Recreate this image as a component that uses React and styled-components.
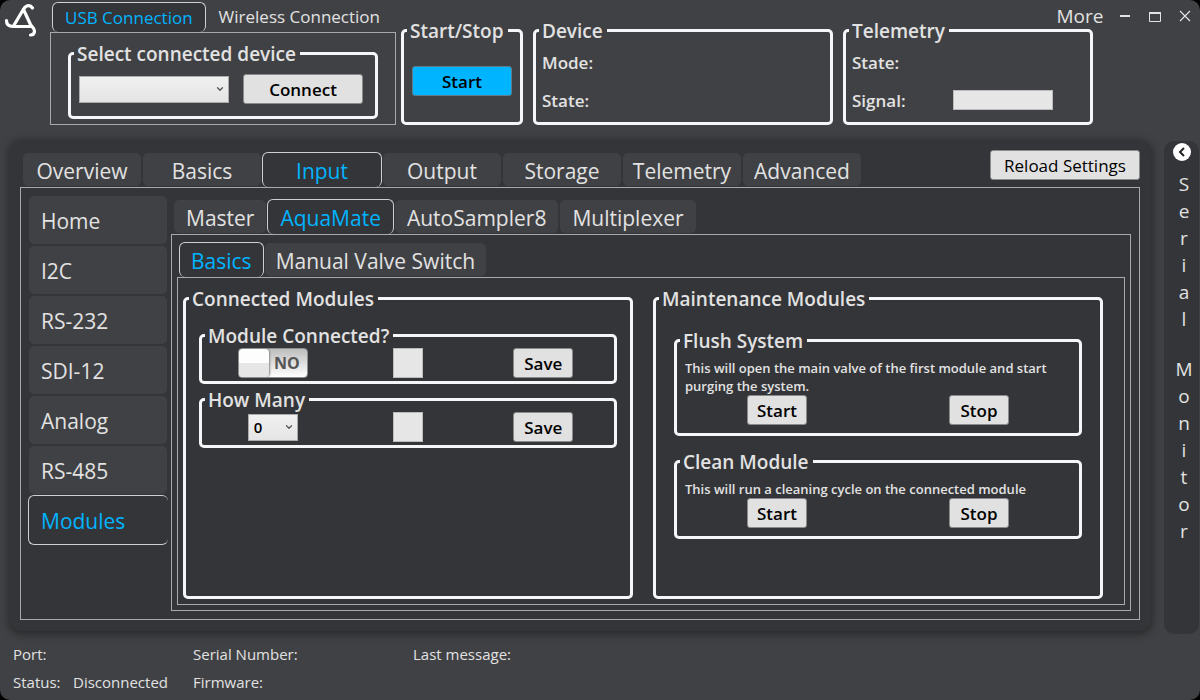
import React, { useState } from 'react'
import styled, { createGlobalStyle, css } from 'styled-components'
import { ChevronDown } from 'lucide-react'

const GlobalStyle = createGlobalStyle`
  * {
    box-sizing: border-box;
  }

  body {
    margin: 0;
    background: #000;
    color: #e2e2e2;
    font-family: 'Open Sans', 'Noto Sans', sans-serif;
    font-size: 15px;
  }

  button, select {
    font-family: inherit;
  }
`

const Window = styled.div`
  display: flex;
  flex-direction: column;
  min-height: 100vh;
  background: #404144;
  border-radius: 10px;
`

/* ---------- header ---------- */

const Header = styled.header`
  display: flex;
  padding-bottom: 15px;
`

const Logo = styled.svg`
  flex: none;
  width: 50px;
  height: 40px;
`

const Connection = styled.section`
  flex: none;
  width: 346px;
  padding-top: 2px;
`

const HeaderMain = styled.div`
  flex: 1;
  display: grid;

  > * {
    grid-area: 1 / 1;
  }
`

const Groups = styled.div`
  display: flex;
  gap: 10px;
  margin: 19px 0 0 5px;
`

const WindowBar = styled.div`
  display: flex;
  align-items: center;
  align-self: start;
  justify-self: end;
  height: 32px;
`

const BarButton = styled.button`
  display: flex;
  align-items: center;
  justify-content: center;
  width: ${props => props.$wide ? '60px' : '30px'};
  height: 32px;
  padding: 0;
  border: 0;
  background: none;
  color: #e2e2e2;
  font-size: 19px;
`

/* ---------- tabs ---------- */

const TabList = styled.div`
  display: flex;
  align-items: flex-end;
  padding-left: 2px;
`

const selectedTab = css`
  border-color: #d0d0d0;
  background: #343538;
  color: #00b4ff;
`

const smallTab = css`
  height: 30px;
  padding: 0 12px;
  font-size: 17px;
`

const fixedTab = css`
  width: 120px;
  padding: 2px 0 0;
`

const tightTab = css`
  padding: 2px 11px 0;
`

const Tab = styled.button`
  height: 35px;
  padding: 2px 12px 0;
  border: 1px solid transparent;
  border-bottom: ${props => props.$selected ? '0' : '1px solid transparent'};
  border-radius: 6px;
  background: #404144;
  background-clip: padding-box;
  color: #e2e2e2;
  font-size: 21px;
  line-height: 28px;
  white-space: nowrap;
  ${props => props.$small && smallTab}
  ${props => props.$fixed && fixedTab}
  ${props => props.$tight && tightTab}
  ${props => props.$selected && selectedTab}
`

const TabPanel = styled.div`
  flex: 1;
  border: 1px solid #a9a9a9;
`

const SideTabs = styled.nav`
  flex: none;
  display: flex;
  flex-direction: column;
  width: 150px;
  padding: 7px 3px 7px 7px;
`

const SideTab = styled.button`
  height: 50px;
  padding: 2px 12px 0;
  border: 1px solid transparent;
  border-right: ${props => props.$selected ? '0' : '1px solid transparent'};
  border-radius: 6px;
  background: #404144;
  background-clip: padding-box;
  color: #e2e2e2;
  font-size: 21px;
  text-align: left;
  ${props => props.$selected && selectedTab}
`

/* ---------- group boxes and controls ---------- */

const Group = styled.fieldset`
  width: ${props => props.$width || 'auto'};
  min-width: 0;
  margin: 0;
  padding: 0 3px;
  border: 3px solid #f4f6f8;
  border-radius: 5px;

  > legend {
    height: 23px;
    padding: 0 4px 0 3px;
    font-size: 19px;
    font-weight: 600;
    line-height: 24px;
    white-space: nowrap;
  }
`

const Stack = styled.div`
  display: flex;
  flex-direction: column;
  gap: ${props => props.$gap};
  padding: ${props => props.$padding};
`

const Button = styled.button`
  width: ${props => props.$width || '60px'};
  height: 30px;
  padding: 2px 0 0;
  border: 1px solid ${props => props.$accent ? '#607a88' : '#8a8a8a'};
  border-radius: 3px;
  background: ${props => props.$accent ? '#00b4ff' : '#e1e1e1'};
  color: #000;
  font-size: 17px;
  font-weight: ${props => props.$light ? 400 : 600};
  line-height: 26px;
`

const ConnectRow = styled.div`
  display: flex;
  align-items: center;
  justify-content: space-between;
  padding: 9px 9px 12px 5px;
`

const SelectBox = styled.div`
  display: grid;
  align-items: center;
  width: ${props => props.$width};

  > * {
    grid-area: 1 / 1;
  }

  svg {
    justify-self: end;
    margin-right: 4px;
    color: #555;
    pointer-events: none;
  }

  select {
    width: 100%;
    height: 27px;
    padding: 0 5px;
    border: 1px solid #acacac;
    border-radius: 0;
    appearance: none;
    background: linear-gradient(#f0f0f0, #e5e5e5);
    color: #000;
    font-size: 15px;
    font-weight: 600;
  }
`

const CenterBody = styled.div`
  padding: 24px 5px;
`

const Field = styled.div`
  display: grid;
  grid-template-columns: 101px 1fr;
  align-items: center;
  height: 38px;
  font-size: 17px;
  font-weight: 600;
`

const Signal = styled.progress`
  width: 100px;
  height: 20px;
  border: 1px solid #bcbcbc;
  appearance: none;

  &::-webkit-progress-bar {
    background: #e6e6e6;
  }
`

const SettingRow = styled.div`
  display: grid;
  grid-template-columns: repeat(3, 1fr);
  align-items: center;
  justify-items: center;
  padding: 1px 0 3px;
`

const Indicator = styled.div`
  width: 30px;
  height: 30px;
  border: 1px solid #bcbcbc;
  background: #e6e6e6;
`

const Toggle = styled.label`
  display: grid;
  align-items: center;
  width: 70px;
  height: 30px;
  border: 1px solid #8e8f8f;
  border-radius: 4px;
  background: linear-gradient(#bdbdbd, #ffffff);
  color: #555;
  font-weight: 700;

  > * {
    grid-area: 1 / 1;
  }

  input {
    width: 30px;
    height: 28px;
    margin: 0;
    border-radius: 4px;
    appearance: none;
    background: linear-gradient(#fdfdfd 50%, #e6e6e6 50%);
    box-shadow: 1px 0 2px #888;
  }

  span {
    padding-right: 7px;
    font-size: 16px;
    text-align: right;
  }
`

const Hint = styled.p`
  margin: 0;
  padding: 7px 5px 0;
  font-size: 13px;
  font-weight: 600;
  line-height: 18px;
`

const ActionRow = styled.div`
  display: grid;
  grid-template-columns: 1fr 1fr;
  column-gap: 8px;
  justify-items: center;
  padding-bottom: 8px;
`

/* ---------- workspace ---------- */

const Workspace = styled.div`
  flex: 1;
  display: flex;
  gap: 13px;
  padding: 0 1px 0 10px;
`

const Panel = styled.main`
  flex: 1;
  display: flex;
  flex-direction: column;
  min-width: 0;
  margin-bottom: 3px;
  padding: 10px 11px 11px 10px;
  border-radius: 12px;
  background: #343538;
  box-shadow: 0 2px 8px 1px rgba(0, 0, 0, 0.4);
`

const TopRow = styled.div`
  display: flex;
  justify-content: space-between;
  height: 37px;
`

const InputPanel = styled(TabPanel)`
  display: flex;
  padding-right: 8px;
  padding-bottom: 8px;
`

const Column = styled.div`
  flex: 1;
  display: flex;
  flex-direction: column;
  min-width: 0;
  padding-top: ${props => props.$top};
`

const ModulesPanel = styled(TabPanel)`
  display: flex;
  padding: 0 5px 5px;
`

const BasicsPanel = styled(TabPanel)`
  display: grid;
  grid-template-columns: 1fr 1fr;
  column-gap: 20px;
  padding: 9px 21px 5px 5px;
`

const SerialBar = styled.aside`
  flex: none;
  display: flex;
  flex-direction: column;
  align-items: center;
  gap: 23px;
  width: 35px;
  margin-top: 1px;
  padding: 2px 0 0 5px;
  border-radius: 10px;
  background: #343538;
  font-size: 19px;
  line-height: 27px;
`

const Expand = styled.button`
  align-self: flex-start;
  width: 18px;
  height: 18px;
  margin: 0 0 -13px 4px;
  padding: 0;
  border: 0;
  border-radius: 50%;
  background: #fff;
  color: #222;

  svg {
    display: block;
  }
`

const Word = styled.div`
  display: flex;
  flex-direction: column;
  align-items: center;
`

const StatusBar = styled.footer`
  display: grid;
  grid-template-columns: 60px 120px 220px 1fr;
  grid-auto-rows: 28px;
  align-items: center;
  padding: 6px 13px 4px;
  white-space: nowrap;
`

const SIDE_TABS = ['Home', 'I2C', 'RS-232', 'SDI-12', 'Analog', 'RS-485', 'Modules']
const MAIN_TABS = ['Overview', 'Basics', 'Input', 'Output', 'Storage', 'Telemetry', 'Advanced']
const MODULE_TABS = ['Master', 'AquaMate', 'AutoSampler8', 'Multiplexer']

const Tabs = ({ items, initial, ...rest }) => {
  const [selected, setSelected] = useState(initial)
  return (
    <TabList role='tablist'>
      {items.map(item => (
        <Tab
          key={item}
          role='tab'
          aria-selected={item === selected}
          $selected={item === selected}
          onClick={() => setSelected(item)}
          {...rest}
        >
          {item}
        </Tab>
      ))}
    </TabList>
  )
}

const Select = ({ width, label, children }) => (
  <SelectBox $width={width}>
    <select aria-label={label}>{children}</select>
    <ChevronDown size={10} strokeWidth={3} />
  </SelectBox>
)

const Setting = ({ title, children }) => (
  <Group>
    <legend>{title}</legend>
    <SettingRow>
      {children}
      <Indicator />
      <Button>Save</Button>
    </SettingRow>
  </Group>
)

const Maintenance = ({ title, hint }) => (
  <Group>
    <legend>{title}</legend>
    <Hint>{hint}</Hint>
    <ActionRow>
      <Button>Start</Button>
      <Button>Stop</Button>
    </ActionRow>
  </Group>
)

const TopBar = () => (
  <Header>
    <Logo viewBox='0 0 50 40' fill='none' stroke='#fff' strokeWidth='3.200' strokeLinecap='round' strokeLinejoin='round'>
      <path d='M6.500 20.500C6.500 24.500 9 26.500 13 26.500H30' />
      <path d='M13.500 26L23 10C25 6 29.500 3.500 32.500 8' />
      <path d='M23.500 9.500L30.500 24.500C31.500 26.500 34.500 28 34.500 31C34.500 33.500 33 35 30.500 35' />
    </Logo>
    <Connection>
      <Tabs items={['USB Connection', 'Wireless Connection']} initial='USB Connection' $small />
      <TabPanel>
        <Stack $padding='9px 17px 5px'>
          <Group>
            <legend>Select connected device</legend>
            <ConnectRow>
              <Select width='150px' label='Connected device' />
              <Button $width='120px'>Connect</Button>
            </ConnectRow>
          </Group>
        </Stack>
      </TabPanel>
    </Connection>
    <HeaderMain>
      <Groups>
        <Group $width='122px'>
          <legend>Start/Stop</legend>
          <CenterBody>
            <Button $width='100%' $accent>Start</Button>
          </CenterBody>
        </Group>
        <Group $width='300px'>
          <legend>Device</legend>
          <Stack $padding='1px 3px 3px'>
            <Field>Mode:</Field>
            <Field>State:</Field>
          </Stack>
        </Group>
        <Group $width='250px'>
          <legend>Telemetry</legend>
          <Stack $padding='1px 3px 3px'>
            <Field>State:</Field>
            <Field>
              <label htmlFor='signal'>Signal:</label>
              <Signal id='signal' value='0' max='100' />
            </Field>
          </Stack>
        </Group>
      </Groups>
      <WindowBar>
        <BarButton $wide>More</BarButton>
        <BarButton aria-label='Minimize'>
          <svg width='12' height='12' stroke='currentColor' strokeWidth='2'><path d='M1 6H11' /></svg>
        </BarButton>
        <BarButton aria-label='Maximize'>
          <svg width='12' height='12' fill='none' stroke='currentColor'>
            <path d='M0.500 2V11.500H11.500V2' />
            <path d='M0 3H12' strokeWidth='2' />
          </svg>
        </BarButton>
        <BarButton aria-label='Close'>
          <svg width='12' height='12' stroke='currentColor' strokeWidth='1.200'><path d='M1 1L11 11M11 1L1 11' /></svg>
        </BarButton>
      </WindowBar>
    </HeaderMain>
  </Header>
)

const App = () => {
  const [page, setPage] = useState('Modules')

  return (
    <Window>
      <GlobalStyle />
      <TopBar />
      <Workspace>
        <Panel>
          <TopRow>
            <Tabs items={MAIN_TABS} initial='Input' $fixed />
            <Button $width='150px' $light>Reload Settings</Button>
          </TopRow>
          <InputPanel>
            <SideTabs>
              {SIDE_TABS.map(item => (
                <SideTab key={item} $selected={item === page} onClick={() => setPage(item)}>
                  {item}
                </SideTab>
              ))}
            </SideTabs>
            <Column $top='11px'>
              <Tabs items={MODULE_TABS} initial='AquaMate' />
              <ModulesPanel>
                <Column $top='7px'>
                  <Tabs items={['Basics', 'Manual Valve Switch']} initial='Basics' $tight />
                  <BasicsPanel>
                    <Group>
                      <legend>Connected Modules</legend>
                      <Stack $gap='4px' $padding='14px 10px'>
                        <Setting title='Module Connected?'>
                          <Toggle>
                            <input type='checkbox' role='switch' />
                            <span>NO</span>
                          </Toggle>
                        </Setting>
                        <Setting title='How Many'>
                          <Select width='50px' label='How many modules'>
                            <option>0</option>
                          </Select>
                        </Setting>
                      </Stack>
                    </Group>
                    <Group>
                      <legend>Maintenance Modules</legend>
                      <Stack $gap='14px' $padding='19px 15px'>
                        <Maintenance
                          title='Flush System'
                          hint='This will open the main valve of the first module and start purging the system.'
                        />
                        <Maintenance
                          title='Clean Module'
                          hint='This will run a cleaning cycle on the connected module'
                        />
                      </Stack>
                    </Group>
                  </BasicsPanel>
                </Column>
              </ModulesPanel>
            </Column>
          </InputPanel>
        </Panel>
        <SerialBar>
          <Expand aria-label='Open serial monitor'>
            <svg width='18' height='18' fill='none' stroke='currentColor' strokeWidth='2'><path d='M11 5L7 9L11 13' /></svg>
          </Expand>
          {['Serial', 'Monitor'].map(word => (
            <Word key={word}>
              {word.split('').map((letter, i) => <span key={i}>{letter}</span>)}
            </Word>
          ))}
        </SerialBar>
      </Workspace>
      <StatusBar>
        <span>Port:</span>
        <span />
        <span>Serial Number:</span>
        <span>Last message:</span>
        <span>Status:</span>
        <span>Disconnected</span>
        <span>Firmware:</span>
      </StatusBar>
    </Window>
  )
}

export default App
